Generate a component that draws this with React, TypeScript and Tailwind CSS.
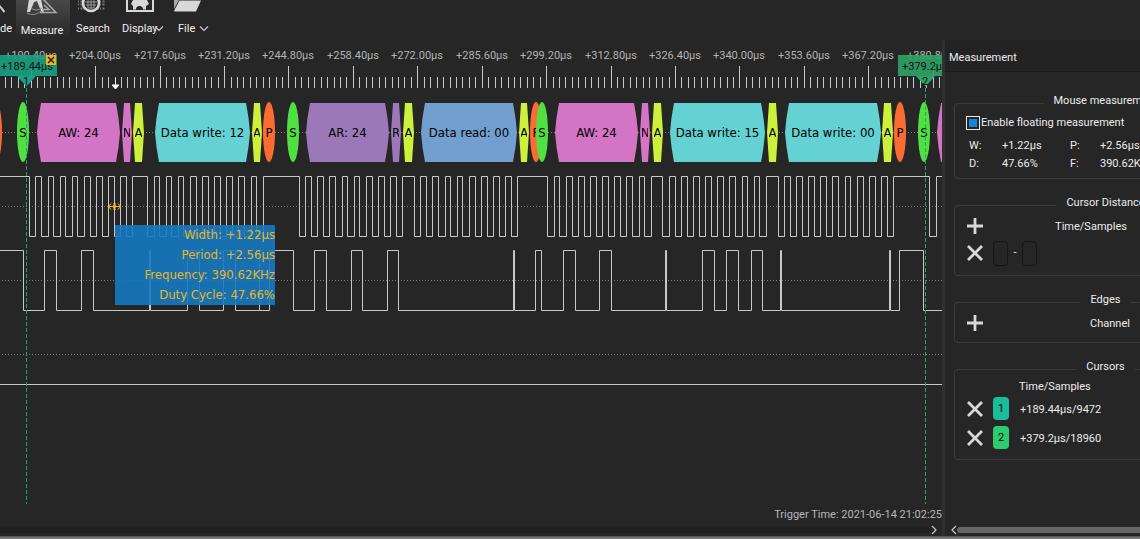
import React from "react";

type Shape = { kind: "hex" | "oval"; x1: number; x2: number; fill: string; label: string };

const PINK = "#d474c4";
const YELLOW = "#cdf03c";
const CYAN = "#64d2d2";
const ORANGE = "#fa6c32";
const GREEN = "#50e042";
const PURPLE = "#9c78b8";
const BLUE = "#729fcf";

const FRAMES: Shape[] = [
  { kind: "oval", x1: -10, x2: 2, fill: ORANGE, label: "" },
  { kind: "oval", x1: 17, x2: 29, fill: GREEN, label: "S" },
  { kind: "hex", x1: 37, x2: 120, fill: PINK, label: "AW: 24" },
  { kind: "hex", x1: 122, x2: 132, fill: PINK, label: "N" },
  { kind: "hex", x1: 133, x2: 144, fill: YELLOW, label: "A" },
  { kind: "hex", x1: 155, x2: 250, fill: CYAN, label: "Data write: 12" },
  { kind: "hex", x1: 252, x2: 262, fill: YELLOW, label: "A" },
  { kind: "oval", x1: 263, x2: 275, fill: ORANGE, label: "P" },
  { kind: "oval", x1: 287, x2: 299, fill: GREEN, label: "S" },
  { kind: "hex", x1: 306, x2: 389, fill: PURPLE, label: "AR: 24" },
  { kind: "hex", x1: 391, x2: 401, fill: PURPLE, label: "R" },
  { kind: "hex", x1: 403, x2: 414, fill: YELLOW, label: "A" },
  { kind: "hex", x1: 421, x2: 517, fill: BLUE, label: "Data read: 00" },
  { kind: "hex", x1: 519, x2: 529, fill: YELLOW, label: "A" },
  { kind: "oval", x1: 530, x2: 542, fill: ORANGE, label: "P" },
  { kind: "oval", x1: 536, x2: 548, fill: GREEN, label: "S" },
  { kind: "hex", x1: 555, x2: 638, fill: PINK, label: "AW: 24" },
  { kind: "hex", x1: 640, x2: 650, fill: PINK, label: "N" },
  { kind: "hex", x1: 652, x2: 663, fill: YELLOW, label: "A" },
  { kind: "hex", x1: 670, x2: 765, fill: CYAN, label: "Data write: 15" },
  { kind: "hex", x1: 767, x2: 778, fill: YELLOW, label: "A" },
  { kind: "hex", x1: 785, x2: 881, fill: CYAN, label: "Data write: 00" },
  { kind: "hex", x1: 882, x2: 893, fill: YELLOW, label: "A" },
  { kind: "oval", x1: 894, x2: 906, fill: ORANGE, label: "P" },
  { kind: "oval", x1: 918, x2: 930, fill: GREEN, label: "S" },
  { kind: "hex", x1: 937, x2: 1020, fill: PINK, label: "" },
];

const CLOCK = [
  29, 35, 41, 48, 53, 60, 65, 72, 77, 84, 90, 96, 102, 108, 114, 120, 126, 132, 147, 154, 159, 166, 171, 178, 183, 190,
  196, 202, 208, 214, 220, 226, 232, 238, 244, 251, 256, 263, 299, 305, 311, 317, 323, 329, 335, 342, 347, 354, 359,
  366, 372, 378, 384, 390, 396, 402, 414, 420, 426, 432, 438, 445, 450, 457, 462, 469, 475, 481, 487, 493, 499, 505,
  511, 517, 547, 554, 559, 566, 572, 578, 584, 590, 596, 602, 608, 614, 620, 626, 632, 639, 644, 651, 662, 669, 675,
  681, 687, 693, 699, 705, 711, 717, 723, 729, 735, 742, 747, 754, 759, 766, 778, 784, 790, 796, 802, 808, 814, 820,
  826, 832, 838, 845, 850, 857, 863, 869, 875, 881, 887, 893, 929, 936,
];

const DATA = [
  23, 44, 56, 81, 93, 149, 150, 187, 199, 223, 235, 259, 259, 269, 293, 314, 326, 351, 362, 387, 398, 513, 514, 535,
  541, 563, 575, 599, 611, 665, 666, 702, 714, 726, 738, 751, 762, 780, 781, 889, 890, 899, 923,
];

const TICK_LABELS = [
  "+190.40µs", "+204.00µs", "+217.60µs", "+231.20µs", "+244.80µs", "+258.40µs", "+272.00µs", "+285.60µs",
  "+299.20µs", "+312.80µs", "+326.40µs", "+340.00µs", "+353.60µs", "+367.20µs", "+380.80µs",
];

function wavePath(edges: number[], high: number, low: number): string {
  let level = high;
  let d = `M-1 ${high + 0.5}`;
  for (const x of edges) {
    d += `H${x + 0.5}`;
    level = level === high ? low : high;
    d += `V${level + 0.5}`;
  }
  return `${d}H2000`;
}

function hexPath(x1: number, x2: number): string {
  const inset = x2 - x1 > 20 ? 4 : 2;
  return `M${x1 + inset} 103H${x2 - inset}Q${x2 - 1} 118 ${x2} 132.5Q${x2 - 1} 147 ${x2 - inset} 162H${x1 + inset}Q${x1 + 1} 147 ${x1} 132.5Q${x1 + 1} 118 ${x1 + inset} 103Z`;
}

function Ruler() {
  const ticks = Array.from({ length: 151 }, (_, i) => i - 4);
  return (
    <g>
      {ticks.map((i) => (
        <rect
          key={i}
          x={Math.floor(31.3 + i * 6.442)}
          y={i % 10 === 0 ? 66 : 77}
          width={1}
          height={i % 10 === 0 ? 22 : 11}
          fill="#c8c8c8"
        />
      ))}
      {TICK_LABELS.map((t, i) => (
        <text key={t} x={Math.floor(31.3 + i * 64.42)} y={59} textAnchor="middle" fontSize={11} fill="#b4b4b4">
          {t}
        </text>
      ))}
    </g>
  );
}

function Decoder() {
  return (
    <g className="font-['DejaVu_Sans_Condensed','Noto_Sans',sans-serif] text-[13px]">
      {FRAMES.map((f, i) => {
        const mid = (f.x1 + f.x2) / 2;
        return (
          <g key={i}>
            <clipPath id={`frame-${i}`}>
              <rect x={f.x1 + 2} y={103} width={f.x2 - f.x1 - 4} height={59} />
            </clipPath>
            {f.kind === "hex" ? (
              <path d={hexPath(f.x1, f.x2)} fill={f.fill} />
            ) : (
              <ellipse cx={mid} cy={132} rx={(f.x2 - f.x1) / 2} ry={30} fill={f.fill} />
            )}
            <text x={mid} y={137} textAnchor="middle" fill="#000" clipPath={`url(#frame-${i})`}>
              {f.label}
            </text>
          </g>
        );
      })}
    </g>
  );
}

function Plot() {
  return (
    <svg className="block h-[465px] w-full" role="img" aria-label="Logic analyzer timeline">
      <g transform="translate(0 -40)">
        <Ruler />
        <path d="M115.5 78V88M112 85H119L115.5 89Z" stroke="#fff" strokeWidth={1} fill="#fff" />
        {[132, 206, 280, 354].map((y) => (
          <line key={y} x1={2} x2={2000} y1={y + 0.5} y2={y + 0.5} stroke="#7c7c7c" strokeDasharray="1 2" />
        ))}
        <Decoder />
        <path d={wavePath(CLOCK, 176, 236)} fill="none" stroke="#c8c8c8" />
        <path d={wavePath(DATA, 250, 310)} fill="none" stroke="#c8c8c8" />
        <line x1={0} x2={2000} y1={384.5} y2={384.5} stroke="#c8c8c8" />
        <path
          d="M108 206.5H121M111 203.5L108.5 206.5L111 209.5M118 203.5L120.5 206.5L118 209.5M113 203.5L116.5 206.5L113 209.5M116 203.5L112.5 206.5L116 209.5"
          stroke="#f0b41e"
          fill="none"
        />
        <line x1={26.5} x2={26.5} y1={88} y2={504} stroke="#1aa284" strokeDasharray="4 2" />
        <line x1={925.5} x2={925.5} y1={88} y2={504} stroke="#2ea566" strokeDasharray="4 2" />
        <path d="M17 76H36L26.5 86.5Z" fill="#1aa284" />
        <path d="M916 76H935L925.5 86.5Z" fill="#2ea566" />
        <text x={26} y={85} textAnchor="middle" fontSize={11} fill="#111">1</text>
        <text x={925} y={85} textAnchor="middle" fontSize={11} fill="#111">2</text>
      </g>
    </svg>
  );
}

function Chevron({ d }: { d: string }) {
  return (
    <svg className="block h-2.5 w-2.5 shrink-0" viewBox="0 0 10 10" fill="none" stroke="#c8c8c8" strokeWidth={1.2}>
      <path d={d} />
    </svg>
  );
}

function Toolbar() {
  return (
    <header className="flex h-10 overflow-hidden text-[#f0f0f0]">
      <button className="flex w-4 flex-col items-start">
        <svg className="h-[22px] w-4" viewBox="0 0 16 22" fill="none" stroke="#d0d0d0" strokeWidth={2}>
          <path d="M-2 4L4.5 12" />
        </svg>
        <span className="leading-[14px]">de</span>
      </button>
      <button className="flex w-[54px] flex-col items-center bg-gradient-to-b from-[#484848] to-[#262626] pr-0.5">
        <svg className="h-6 w-[54px]" viewBox="0 0 54 24" fill="none" stroke="#cfcfcf">
          <path d="M14 -1L12 12L15 12L19 2L22 1L26 11L29 13L26 -1Z" fill="#d6d6d6" stroke="none" />
          <path d="M12 13Q19 17 26 11M16 8Q21 12 27 8" stroke="#8f8f8f" />
          <path d="M28 -1L41 12.5H25M29 5L34 9.500H27" strokeWidth={1.5} stroke="#a9a9a9" />
        </svg>
        <span className="leading-[14px]">Measure</span>
      </button>
      <button className="flex w-[46px] flex-col items-center">
        <svg className="h-[22px] w-10" viewBox="0 0 40 22" fill="none">
          <path d="M5 1.500H32M5 4.500H32M5 8.500H32" stroke="#777" strokeDasharray="1 1.500 2 1" strokeWidth={2} />
          <circle cx="18" cy="3" r="8" fill="#262626" stroke="#d8d8d8" strokeWidth={2.6} />
          <path d="M12 2H24M13 5H23M15 8H21M15 -1V8M18 -1V9M21 -1V8" stroke="#9a9a9a" />
        </svg>
        <span className="leading-[14px]">Search</span>
      </button>
      <button className="ml-1 flex w-[42px] flex-col items-start">
        <svg className="h-[22px] w-[42px]" viewBox="0 0 42 22" fill="none">
          <path d="M7 -2V11H33V-2" stroke="#d8d8d8" strokeWidth={2} />
          <path d="M13 9.500V6L11 4L13 0H27L29 4L26 6V9.500H23A3.500 3.500 0 0 0 16 9.500Z" fill="#d8d8d8" />
        </svg>
        <span className="flex items-center -space-x-1 pl-0.5 leading-[14px]">
          <span>Display</span>
          <Chevron d="M1 2.500L5 6.500L9 2.500" />
        </span>
      </button>
      <button className="ml-2 flex w-[42px] flex-col items-start">
        <svg className="h-[22px] w-8" viewBox="0 0 32 22">
          <path d="M4 -2V9L9 0H31V-2Z" fill="#a8a8a8" />
          <path d="M4 11L9.5 0.5H31L26 11.5H5Z" fill="#d8d8d8" />
        </svg>
        <span className="flex items-center gap-1 pl-2 leading-[14px]">
          File
          <Chevron d="M1 2.500L5 6.500L9 2.500" />
        </span>
      </button>
    </header>
  );
}

function Group({ title, children }: { title: string; children: React.ReactNode }) {
  return (
    <fieldset className="rounded-sm border border-[#3c3c3c] px-3">
      <legend className="mx-auto px-2.5 pb-1 leading-4">{title}</legend>
      {children}
    </fieldset>
  );
}

function IconButton({ label, d }: { label: string; d: string }) {
  return (
    <button aria-label={label} className="mr-2.5 block h-4 w-4 shrink-0">
      <svg className="block h-4 w-4" viewBox="0 0 16 16" stroke="#d8d8d8" strokeWidth={2.8}>
        <path d={d} />
      </svg>
    </button>
  );
}

const PLUS = "M8 0V16M0 8H16";
const CROSS = "M1 1L15 15M15 1L1 15";

const CURSORS = [
  { id: 1, color: "bg-[#1abc9c]", text: "+189.44µs/9472" },
  { id: 2, color: "bg-[#2ecc71]", text: "+379.2µs/18960" },
];

function MeasurementPanel() {
  return (
    <aside className="flex w-[195px] shrink-0 flex-col overflow-hidden text-[#ececec]">
      <h2 className="flex h-8 items-center border-b border-[#1b1b1b] bg-[#232323] pt-1.5 pl-1">Measurement</h2>
      <div className="mt-[21px] flex w-[321px] grow flex-col gap-4 px-[9px]">
        <Group title="Mouse measurement">
          <label className="flex h-5 items-center gap-px whitespace-nowrap">
            <input
              type="checkbox"
              defaultChecked
              className="-ml-px h-3.5 w-3.5 appearance-none border border-[#e8e8e8] bg-[#262626] p-0.5 checked:bg-[#1883d7] checked:bg-clip-content"
            />
            Enable floating measurement
          </label>
          <dl className="mt-1 mb-[5px] grid grid-cols-[33px_68px_30px_1fr] pl-0.5 leading-[18px]">
            <dt>W:</dt>
            <dd>+1.22µs</dd>
            <dt>P:</dt>
            <dd>+2.56µs</dd>
            <dt>D:</dt>
            <dd>47.66%</dd>
            <dt>F:</dt>
            <dd>390.62KHz</dd>
          </dl>
        </Group>
        <Group title="Cursor Distance">
          <div className="flex h-[22px] items-center">
            <IconButton label="Add cursor distance" d={PLUS} />
            <span className="w-[196px] pt-0.5 text-center">Time/Samples</span>
          </div>
          <div className="mb-1.5 flex h-8 items-center">
            <IconButton label="Remove cursor distance" d={CROSS} />
            <button aria-label="First cursor" className="h-[25px] w-[15px] rounded border border-[#161616]" />
            <span className="w-3.5 text-center">-</span>
            <button aria-label="Second cursor" className="h-[25px] w-[15px] rounded border border-[#161616]" />
          </div>
        </Group>
        <Group title="Edges">
          <div className="mb-2 flex h-[22px] items-center">
            <IconButton label="Add edge measurement" d={PLUS} />
            <span className="w-[234px] pt-0.5 text-center">Channel</span>
          </div>
        </Group>
        <Group title="Cursors">
          <p className="pl-[52px] leading-[15px]">Time/Samples</p>
          <ul className="mb-[7px]">
            {CURSORS.map((c) => (
              <li key={c.id} className="flex h-[29px] items-center">
                <IconButton label={`Remove cursor ${c.id}`} d={CROSS} />
                <span className={`${c.color} mr-[11px] h-[23px] w-4 rounded text-center leading-6 text-black`}>
                  {c.id}
                </span>
                <span className="pt-1">{c.text}</span>
              </li>
            ))}
          </ul>
        </Group>
      </div>
      <div className="flex h-[13px] items-center pl-1">
        <button aria-label="Scroll left">
          <Chevron d="M7 1L3 5L7 9" />
        </button>
        <div className="-ml-0.5 h-1.5 grow rounded-l-full bg-[#666]" />
      </div>
    </aside>
  );
}

export default function App() {
  return (
    <div className="flex min-h-screen flex-col bg-[#262626] font-['Roboto','Noto_Sans',sans-serif] text-[11px]">
      <Toolbar />
      <div className="flex grow">
        <main className="relative flex min-w-0 grow flex-col overflow-hidden">
          <Plot />
          <div className="absolute top-[15px] left-0 h-[21px] w-[57px] bg-[#1aa284]/90 text-[#111]">
            <span className="block pl-px leading-6">+189.44µs</span>
            <button
              aria-label="Delete cursor"
              className="absolute top-0 right-px flex h-2.5 w-2.5 items-center justify-center bg-[#f0b41e]"
            >
              <svg className="h-2 w-2" viewBox="0 0 8 8" stroke="#111" strokeWidth={1.2}>
                <path d="M1 1L7 7M7 1L1 7" />
              </svg>
            </button>
          </div>
          <div className="absolute top-[15px] left-[898px] h-[21px] w-[57px] bg-[#2ea566]/90 text-[#111]">
            <span className="block pl-1 leading-6">+379.2µs</span>
          </div>
          <div className="absolute top-[185px] left-[115px] w-40 bg-[#167ac0]/90 text-right font-['DejaVu_Sans_Condensed','Noto_Sans',sans-serif] text-[13px] leading-5 text-[#ebb424]">
            <p>Width: +1.22µs</p>
            <p>Period: +2.56µs</p>
            <p>Frequency: 390.62KHz</p>
            <p>Duty Cycle: 47.66%</p>
          </div>
          <p className="grow pt-0.5 text-right leading-4 text-[#b8b8b8]">Trigger Time: 2021-06-14 21:02:25</p>
          <div className="flex h-[13px] items-center pr-[3px]">
            <div className="h-1.5 grow bg-[#202020]" />
            <button aria-label="Scroll right">
              <Chevron d="M3 1L7 5L3 9" />
            </button>
          </div>
        </main>
        <div className="w-[3px] shrink-0 bg-[#303030]" />
        <MeasurementPanel />
      </div>
      <footer className="h-[3px] border-t border-[#555] bg-[#777]" />
    </div>
  );
}
